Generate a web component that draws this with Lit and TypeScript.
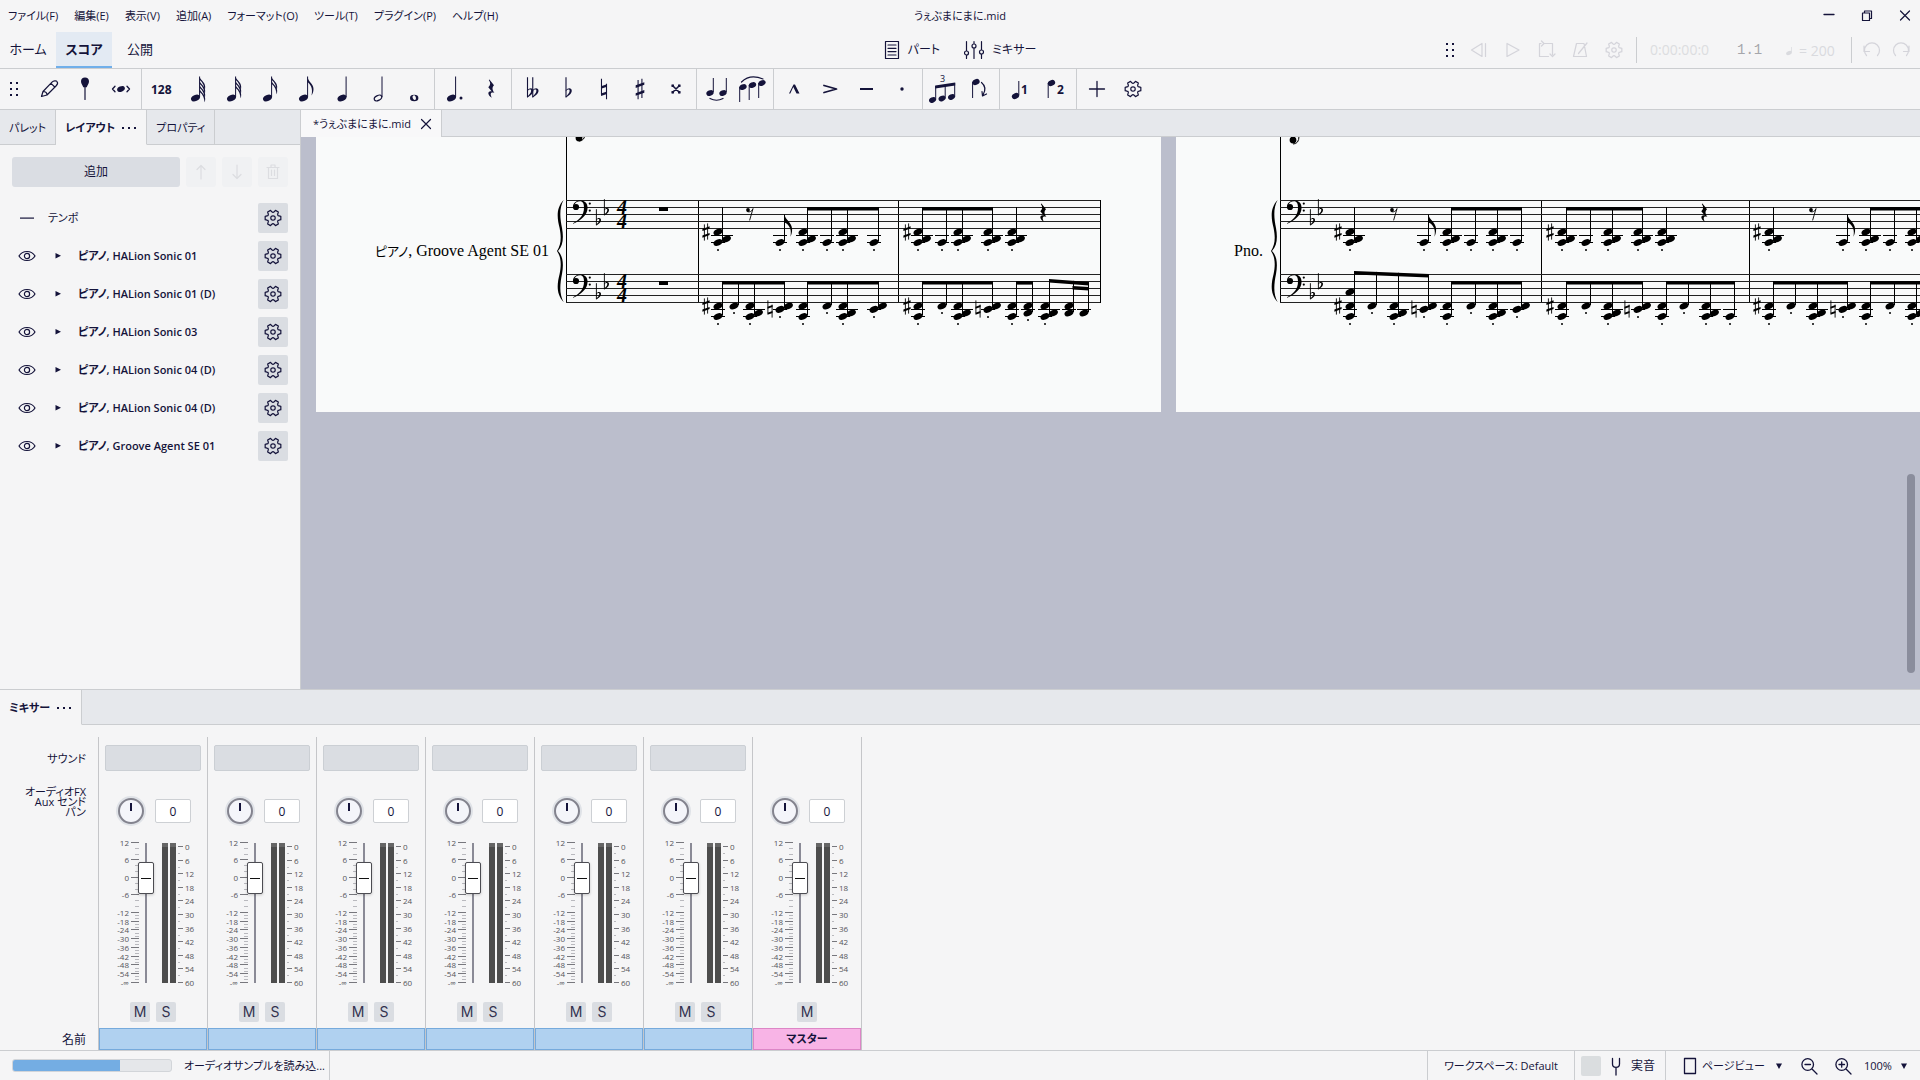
import { LitElement, html, svg, css, nothing, SVGTemplateResult, TemplateResult } from "lit";
import { customElement, property } from "lit/decorators.js";
import { classMap } from "lit/directives/class-map.js";

type Piece = SVGTemplateResult | SVGTemplateResult[] | typeof nothing;

/* ---------- music symbols, drawn around the given point ---------- */

const head = (x: number, y: number): SVGTemplateResult =>
  svg`<ellipse cx=${x} cy=${y} rx="4.7" ry="3.1" transform="rotate(-24 ${x} ${y})"/>`;

const stem = (x: number, y1: number, y2: number): SVGTemplateResult =>
  svg`<path d="M${x} ${y1}V${y2}" stroke="currentColor" stroke-width="1" fill="none"/>`;

const sharp = (x: number, y: number): SVGTemplateResult => svg`
  <g transform="translate(${x} ${y})">
    <path d="M-1.6 -7.6V8.6M1.6 -8.6V7.6" stroke="currentColor" stroke-width=".9"/>
    <path d="M-3.6 -2.2L3.6 -4.8V-2.6L-3.6 0zM-3.6 4.4L3.6 1.8V4L-3.6 6.6z" transform="translate(0 -.9)"/>
  </g>`;

const natural = (x: number, y: number): SVGTemplateResult => svg`
  <g transform="translate(${x} ${y})">
    <path d="M-2.1 -8.6V4.4M2.1 -4.4V8.6" stroke="currentColor" stroke-width=".9"/>
    <path d="M-2.5 -2.2L2.5 -3.9V-1.9L-2.5 -.2zM-2.5 3.8L2.5 2.1V4.1L-2.5 5.8z"/>
  </g>`;

const flat = (x: number, y: number): SVGTemplateResult => svg`
  <g transform="translate(${x} ${y})">
    <path d="M.4 -11.8V4.2" stroke="currentColor" stroke-width=".9"/>
    <path d="M.2 -1.4C1.8 -3.6 5.2 -3.6 5 -.8C4.8 1.6 2.4 3 .2 4.6V3.6C1.8 2.2 3.2 .8 3.3 -.8C3.4 -2.4 1.6 -2.2 .2 -.6z"/>
  </g>`;

const quarterRest = (x: number, y: number): SVGTemplateResult => svg`
  <path transform="translate(${x} ${y})" d="M-1.6 -9.5L3 -3.7C1 -1.7 1 .5 3.4 4C.6 2.8 -1.8 4 .9 8.8C-4 6 -3.6 1.4 .8 2.4L-2.7 -1.8C-.3 -4.2 -.2 -6 -2.2 -9z"/>`;

const eighthRest = (x: number, y: number): SVGTemplateResult => svg`
  <g transform="translate(${x} ${y})">
    <circle cx="-2" cy="-4" r="1.9"/>
    <path d="M-3 -2.6C-.6 -1.4 1.8 -2.6 3 -5.4L-.4 6.4" fill="none" stroke="currentColor" stroke-width=".9"/>
  </g>`;

const flag = (x: number, y: number): SVGTemplateResult => svg`
  <path transform="translate(${x} ${y})" d="M0 0C.8 5.4 7.4 8 7.6 14.4C7.7 17.6 7 19.8 6 22.2C6.4 19 6.6 16.4 5.6 13.8C4.4 10.6 2.2 8.8 0 8z"/>`;

const smallFlag = (x: number, y: number): SVGTemplateResult => svg`
  <path transform="translate(${x} ${y})" d="M0 0C.6 3.4 5 5 5.6 9.4C5.8 11.4 5.6 12.6 5 13.8C5 10.4 3.6 6 0 3.2z"/>`;

const bassClef = (x: number, y: number): SVGTemplateResult => svg`
  <g transform="translate(${x} ${y})">
    <circle cx="0" cy="0" r="3.1"/>
    <path d="M-3 -.8C-2.6 -4.6 1 -6.6 4.4 -6.6C9 -6.6 11.6 -3.6 11.6 .6C11.6 8.5 4.6 13.6 -2.8 16.8L-3 16.2C4 12.5 8 8 8 .6C8 -3.4 6.8 -5.7 4 -5.7C1.2 -5.7 -1 -4.2 -1.6 -2z"/>
    <circle cx="13.8" cy="-3.4" r="1.1"/><circle cx="13.8" cy="3.6" r="1.1"/>
  </g>`;

/* ---------- score data ---------- */

// full: three heads, low: lowest head only, wide: outer heads, mid: single upper head,
// pair: adjacent seconds, third: stacked third, base: lower head of the third, tall: wide plus a high head
type Kind = "full" | "low" | "wide" | "mid" | "pair" | "third" | "base" | "tall";
type Chord = [x: number, kind: Kind, plain?: boolean];
interface Group { notes: Chord[]; slope?: [number, number]; flagged?: boolean; second?: boolean; }
interface Voice { groups: Group[]; sharps: number[]; naturals?: number[]; eighthRests?: number[]; quarterRests?: number[]; }
interface PageData {
  left: number; right: number; start: number; end: number; name: [kana: string, latin: string]; bars: number[];
  opening: boolean; upper: Voice; lower: Voice;
}

const g = (...notes: Chord[]): Group => ({ notes });

const PAGES: PageData[] = [
  {
    left: 316, right: 1161, start: 566, end: 1100, name: ["ピアノ", ", Groove Agent SE 01"], bars: [698, 898, 1100], opening: true,
    upper: {
      sharps: [706, 907], eighthRests: [750], quarterRests: [1043],
      groups: [
        g([718, "full"]), { notes: [[780, "low"]], flagged: true },
        g([803, "full"], [827, "low"], [843, "full"], [874, "low"]),
        g([918, "full"], [942, "low"], [958, "full"], [988, "full"]), g([1012, "full"]),
      ],
    },
    lower: {
      sharps: [706, 907], naturals: [770, 978],
      groups: [
        g([718, "wide"], [734, "mid"], [750, "full"], [780, "pair"]),
        g([803, "wide"], [827, "mid"], [843, "full"], [874, "pair"]),
        g([918, "wide"], [942, "mid"], [958, "full"], [988, "pair"]),
        g([1012, "wide"], [1028, "third"]),
        { notes: [[1045, "full"], [1069, "third", true], [1084, "base", true]], slope: [5, 8], second: true },
      ],
    },
  },
  {
    left: 1176, right: 2021, start: 1280, end: 1990, name: ["", "Pno."], bars: [1541, 1749, 1990], opening: false,
    upper: {
      sharps: [1338, 1550, 1757], eighthRests: [1394, 1813], quarterRests: [1704],
      groups: [
        g([1350, "full"]), { notes: [[1424, "low"]], flagged: true },
        g([1447, "full"], [1471, "low"], [1493, "full"], [1517, "low"]),
        g([1562, "full"], [1586, "low"], [1608, "full"], [1638, "full"]), g([1662, "full"]),
        g([1769, "full"]), { notes: [[1843, "low"]], flagged: true },
        g([1866, "full"], [1890, "low"], [1912, "full"], [1936, "low"]),
      ],
    },
    lower: {
      sharps: [1338, 1550, 1757], naturals: [1414, 1627, 1833],
      groups: [
        { notes: [[1350, "tall"], [1372, "mid"], [1394, "full"], [1424, "pair"]], slope: [-3, 0] },
        g([1447, "wide"], [1471, "mid"], [1493, "full"], [1517, "pair"]),
        g([1562, "wide"], [1586, "mid"], [1608, "full"], [1638, "pair"]),
        g([1662, "wide"], [1684, "mid"], [1706, "full"], [1730, "low"]),
        g([1769, "wide"], [1791, "mid"], [1813, "full"], [1843, "pair"]),
        g([1866, "wide"], [1890, "mid"], [1912, "full"], [1936, "pair"]),
      ],
    },
  },
];

const SHAPES: Record<Kind, { left: number[]; right: number[]; dot: number }> = {
  full: { left: [32, 42.5], right: [39], dot: 50 },
  low: { left: [42.5], right: [], dot: 50 },
  wide: { left: [32, 42.5], right: [], dot: 50 },
  mid: { left: [32], right: [], dot: 39 },
  pair: { left: [35.4], right: [32], dot: 43 },
  third: { left: [32, 39], right: [], dot: 46 },
  base: { left: [39], right: [], dot: 46 },
  tall: { left: [18, 32, 42.5], right: [], dot: 50 },
};

const drawChord = (top: number, [x, kind, plain]: Chord): SVGTemplateResult => {
  const shape = SHAPES[kind];
  const lowest = Math.max(...shape.left, ...shape.right);
  const reach = kind === "full" ? 15 : 7;
  return svg`
    ${shape.left.map((y) => head(x, top + y))}
    ${shape.right.map((y) => head(x + 8.4, top + y))}
    ${lowest > 34 ? svg`<path d="M${x - 7} ${top + 35.5}H${x + reach}" class="ledger"/>` : nothing}
    ${lowest > 41 ? svg`<path d="M${x - 7} ${top + 42.5}H${x + 7}" class="ledger"/>` : nothing}
    ${plain ? nothing : svg`<circle cx=${x} cy=${top + shape.dot} r="1"/>`}`;
};

const drawGroup = (top: number, group: Group): SVGTemplateResult => {
  const { notes, flagged, second } = group;
  const first = notes[0][0] + 4.5;
  const last = notes[notes.length - 1][0] + 4.5;
  const [from, to] = group.slope ?? [7, 7];
  const beamed = notes.length > 1;
  const at = (x: number): number => (beamed ? from + ((to - from) * (x - first)) / (last - first) : flagged ? 14.5 : 7);
  return svg`
    ${notes.map((n) => drawChord(top, n))}
    ${notes.map((n) => stem(n[0] + 4.5, top + at(n[0] + 4.5), top + Math.max(...SHAPES[n[1]].left) - 1))}
    ${beamed ? svg`<path d="M${first - 0.5} ${top + from}L${last + 0.5} ${top + to}v3.6L${first - 0.5} ${top + from + 3.6}z"/>` : nothing}
    ${second ? svg`<path d="M${last - 16} ${top + 12}L${last + 0.5} ${top + 13}v3.4L${last - 16} ${top + 15.4}z"/>` : nothing}
    ${flagged ? flag(first, top + 14.5) : nothing}`;
};

const drawStaff = (page: PageData, top: number, voice: Voice): SVGTemplateResult => svg`
  ${[0, 7, 14, 21, 28].map((d) => svg`<path class="line" d="M${page.start} ${top + d + 0.5}H${page.end}"/>`)}
  ${bassClef(page.start + 10, top + 7)}
  ${flat(page.start + 30, top + 21)}${flat(page.start + 38, top + 11)}
  ${page.opening ? svg`
    <text class="meter" x=${page.start + 51} y=${top + 14}>4</text>
    <text class="meter" x=${page.start + 51} y=${top + 28}>4</text>
    <rect x=${page.start + 93} y=${top + 7} width="9" height="4"/>` : nothing}
  ${voice.sharps.map((x) => sharp(x, top + 32))}
  ${(voice.naturals ?? []).map((x) => natural(x, top + 35))}
  ${(voice.eighthRests ?? []).map((x) => eighthRest(x, top + 14))}
  ${(voice.quarterRests ?? []).map((x) => quarterRest(x, top + 13))}
  ${voice.groups.map((group) => drawGroup(top, group))}`;

@customElement("score-page")
export class ScorePage extends LitElement {
  @property({ attribute: false }) page!: PageData;

  static styles = css`
    :host { display: block; flex: none; background: #f9fafa; }
    svg { display: block; color: #000; }
    .line { stroke: #222; stroke-width: 1; }
    .ledger { stroke: #000; stroke-width: 1; }
    .bar { stroke: #000; stroke-width: 1; }
    .name { font: 16px "Liberation Serif", "Noto Sans CJK JP", serif; font-feature-settings: "palt"; text-anchor: end; }
    .kana { font-size: 13px; }
    .meter { font: italic bold 20px "Liberation Serif", serif; }
  `;

  render(): TemplateResult {
    const p = this.page;
    const width = p.right - p.left;
    const b = p.start - 9;
    return html`
      <svg width=${width} height="275" viewBox="${p.left} 137 ${width} 275" fill="currentColor" role="img" aria-label=${p.name.join("")}>
        <circle cx=${p.start + 13} cy=${p.opening ? 138 : 140} r="3.4"/>
        <path d="M${p.start + 13} ${p.opening ? 141 : 144}q6 0 6 -8" fill="none" stroke="#000"/>
        <path class="bar" d="M${p.start + 0.5} 137V303"/>
        ${p.bars.map((x) => svg`<path class="bar" d="M${x + 0.5} 200V303"/>`)}
        <path d="M${b + 6.6} 200C${b - 1} 208 ${b} 218 ${b + 2.6} 228C${b + 4.6} 238 ${b + 4} 245 ${b} 251C${b + 4} 257 ${b + 4.6} 264 ${b + 2.6} 274C${b} 284 ${b - 1} 294 ${b + 6.6} 302C${b + 2} 294 ${b + 3} 284 ${b + 5} 274C${b + 6.8} 264 ${b + 6} 256 ${b + 1} 251C${b + 6} 246 ${b + 6.8} 238 ${b + 5} 228C${b + 3} 218 ${b + 2} 208 ${b + 6.6} 200z"/>
        <text class="name" x=${p.start - 17} y="256"><tspan class="kana">${p.name[0]}</tspan>${p.name[1]}</text>
        ${drawStaff(p, 200, p.upper)}
        ${drawStaff(p, 274, p.lower)}
      </svg>`;
  }
}

/* ---------- interface icons ---------- */

const gearPath = ((): string => {
  const point = (deg: number, r: number): string => {
    const a = (deg * Math.PI) / 180;
    return `${(r * Math.cos(a)).toFixed(2)} ${(r * Math.sin(a)).toFixed(2)}`;
  };
  const parts: string[] = [];
  for (let a = 0; a < 360; a += 60) {
    parts.push(`L${point(a - 12, 8)}`, `L${point(a + 12, 8)}`, `L${point(a + 19, 6.4)}`, `Q${point(a + 30, 4.8)} ${point(a + 41, 6.4)}`);
  }
  return `M${parts.join("").slice(1)}z`;
})();

const icon = (body: Piece, size = 32, w = size, h = size): TemplateResult => html`
  <svg class="icon" width=${w} height=${h} viewBox="${(32 - w) / 2} ${(32 - h) / 2} ${w} ${h}" fill="currentColor" aria-hidden="true">${body}</svg>`;

const line = (d: string, width = 1.2): SVGTemplateResult =>
  svg`<path d=${d} fill="none" stroke="currentColor" stroke-width=${width} stroke-linecap="round" stroke-linejoin="round"/>`;

const gear = svg`<g transform="translate(16 16)" fill="none" stroke="currentColor" stroke-width="1.2" stroke-linejoin="round"><path d=${gearPath}/><circle r="2.2"/></g>`;
const grip = svg`${[10, 16, 22].map((y) => svg`<path d="M12 ${y - 1}h2v2h-2zM18 ${y - 1}h2v2h-2z"/>`)}`;
const eye = line("M8 16C11.500 10 20.500 10 24 16C20.500 22 11.500 22 8 16zM18.600 16a2.600 2.600 0 1 1 -5.200 0a2.600 2.600 0 1 1 5.200 0");
const caret = svg`<path d="M13 13.500h6l-3 5.500z"/>`;

const note = (flags: number): SVGTemplateResult => svg`
  ${head(13.5, 25)}${stem(17.6, 3.5, 24)}
  ${flags === 1
    ? svg`<path d="M17.500 3.500C18 9 23.500 10.500 23.500 16C23.500 19 22.500 21 21.500 22.500C22.500 18 22.500 13 17.500 9z"/>`
    : Array.from({ length: flags }, (_, i) => smallFlag(17.5, 3.5 + i * 4))}`;

const digit = (x: number, y: number, text: string, size = 13): SVGTemplateResult =>
  svg`<text x=${x} y=${y} font-size=${size} font-weight="700">${text}</text>`;

interface Tool { label: string; art: Piece; }

const TOOL_GROUPS: Tool[][] = [
  [
    { label: "編集", art: line("M8.500 23.500L10 18.500L19 9.200C20.500 7.700 23.300 7.500 24 8.500C24.800 9.500 24.500 11.500 23 13L14 22zM10 18.500C12.500 18.500 14 20 14 22M18 10.400L22 14.200") },
    { label: "固定", art: svg`<path d="M16 4.500c2.500 0 4 1.500 4 3.800c0 2.500-1.500 3.700-2.300 6h-3.400c-.8-2.300-2.300-3.500-2.300-6c0-2.300 1.500-3.800 4-3.800z"/>${line("M16 13V26.500", 1.2)}` },
    { label: "試聴", art: svg`<ellipse cx="16" cy="16" rx="4" ry="2.700" transform="rotate(-24 16 16)"/>${line("M10 13.200L7.500 16L10 18.800M22 13.200L24.500 16L22 18.800", 1.3)}` },
  ],
  [
    { label: "128分", art: digit(5, 20.5, "128", 12) },
    { label: "64分", art: note(4) },
    { label: "32分", art: note(3) },
    { label: "16分", art: note(2) },
    { label: "8分", art: note(1) },
    { label: "4分", art: svg`${head(16, 25)}${stem(20.1, 3.5, 24)}` },
    { label: "2分", art: svg`<ellipse cx="16" cy="25" rx="4" ry="2.400" transform="rotate(-28 16 25)" fill="none" stroke="currentColor" stroke-width="1.200"/>${stem(20, 3.5, 24)}` },
    { label: "全", art: svg`<path fill-rule="evenodd" d="M12 25a4.200 3.300 0 1 1 8.400 0a4.200 3.300 0 1 1 -8.400 0zM14.600 24.500c.4 1.800 1.400 2.600 2.500 2.400c1-.3 1-1.900.6-2.900c-.4-1.200-1.300-1.800-2.200-1.600c-.8.200-1.100 1.100-.9 2.100z"/>` },
  ],
  [
    { label: "付点", art: svg`${head(12.5, 25)}${stem(16.6, 3.5, 24)}<circle cx="22" cy="25" r="1.500"/>` },
    { label: "休符", art: quarterRest(16, 16) },
  ],
  [
    { label: "ダブルフラット", art: svg`<g transform="translate(11 19) scale(1.250)">${flat(0, 0)}${flat(4.2, 0)}</g>` },
    { label: "フラット", art: svg`<g transform="translate(13.500 19) scale(1.250)">${flat(0, 0)}</g>` },
    { label: "ナチュラル", art: svg`<g transform="translate(16 16) scale(1.200)">${natural(0, 0)}</g>` },
    { label: "シャープ", art: svg`<g transform="translate(16 16) scale(1.200)">${sharp(0, 0)}</g>` },
    { label: "ダブルシャープ", art: svg`${line("M12.500 12.500L19.500 19.500M19.500 12.500L12.500 19.500", 1.5)}<path d="M11.500 11.500h2.500v2.500h-2.500zM18 11.500h2.500v2.500h-2.500zM11.500 18h2.500v2.500h-2.500zM18 18h2.500v2.500h-2.500z"/>` },
  ],
  [
    { label: "タイ", art: svg`<g transform="translate(0 -2)">${[9, 22].map((x) => svg`<ellipse cx=${x} cy="22" rx="3.800" ry="2.700" transform="rotate(-24 ${x} 22)"/>${stem(x + 3.3, 7, 21)}`)}</g>${line("M9 25.500Q15.500 29 22 25.500")}` },
    { label: "スラー", art: svg`${[[6, 14], [15.5, 12], [25, 10]].map(([x, y]) => svg`<ellipse cx=${x} cy=${y} rx="3.800" ry="2.700" transform="rotate(-24 ${x} ${y})"/>${stem(x - 3.3, y, y + 15)}`)}${line("M4.500 9Q13 .500 26 6")}` },
  ],
  [
    { label: "マルカート", art: svg`<path d="M11 20.500L15.500 11.500h1.500L21.500 20.500h-3L15.300 14L12.300 20.500z"/>` },
    { label: "アクセント", art: line("M10 12.500L22.500 16L10 19.500", 1.8) },
    { label: "テヌート", art: svg`<path d="M10 15h13v2h-13z"/>` },
    { label: "スタッカート", art: svg`<circle cx="16" cy="16" r="1.700"/>` },
  ],
  [
    { label: "連符", art: svg`${[[5.5, 27], [15, 25.500], [24.500, 24]].map(([x, y]) => svg`<ellipse cx=${x} cy=${y} rx="3.600" ry="2.600" transform="rotate(-24 ${x} ${y})"/>${stem(x + 3.2, y - 14, y)}`)}<path d="M8.200 12.500L28.200 9.500V12.500L8.200 15.500z"/><text x="13" y="9" font-size="9">3</text>` },
    { label: "反転", art: svg`<ellipse cx="13" cy="9" rx="3.800" ry="2.800" transform="rotate(-24 13 9)"/>${stem(9.6, 9, 25)}${line("M18.500 9.500Q24.500 14.500 20 22M19 18.500L19.500 23L23.500 21")}` },
  ],
  [
    { label: "声部1", art: svg`<ellipse cx="11.500" cy="23" rx="3.800" ry="2.800" transform="rotate(-24 11.500 23)"/>${stem(14.8, 8, 22)}${digit(17, 20.500, "1", 12)}` },
    { label: "声部2", art: svg`<ellipse cx="11.500" cy="10" rx="3.800" ry="2.800" transform="rotate(-24 11.500 10)"/>${stem(8.2, 10, 25)}${digit(17, 20.500, "2", 12)}` },
  ],
  [
    { label: "追加", art: line("M8.500 16H23.500M16 8.500V23.500", 1.3) },
    { label: "設定", art: gear },
  ],
];

const TRANSPORT: Tool[] = [
  { label: "巻き戻し", art: line("M20 9.500V22.500L9.500 16zM23.500 9.500V22.500") },
  { label: "再生", art: line("M11 9.500V22.500L23 16z") },
  { label: "ループ", art: line("M13.500 9.500H22.500V20.500M11 9.500H9.500V22.500H18.500M20 20L22.500 22.500L25 20M11.500 7L14 9.500L11.500 12") },
  { label: "メトロノーム", art: line("M12.500 9.500H20L22.500 22.500H9.500zM14.500 19.500L23 9") },
  { label: "再生設定", art: gear },
];

/* ---------- mixer strip ---------- */

const LEFT_SCALE: [string, number][] = [
  ["12", 0], ["6", 17.5], ["0", 35], ["-6", 52.5], ["-12", 70], ["-18", 79], ["-24", 87.5], ["-30", 96.5],
  ["-36", 105], ["-42", 114], ["-48", 122.5], ["-54", 131.5], ["-∞", 140],
];
const RIGHT_SCALE = Array.from({ length: 11 }, (_, i): [string, number] => [String(i * 6), 4 + i * 13.6]);

const LEFT_MINOR = LEFT_SCALE.slice(0, -1).flatMap(([, y], i) => {
  const step = LEFT_SCALE[i + 1][1] - y;
  return [1 / 3, 2 / 3].map((f) => y + f * step);
});

@customElement("mixer-strip")
export class MixerStrip extends LitElement {
  @property() name = "";
  @property({ type: Boolean, reflect: true }) master = false;

  static styles = css`
    :host {
      display: flex; flex-direction: column; flex: none; width: 108px; border-left: 1px solid #c5c6c9;
      color: #14133a; font: 12px/16px "Open Sans", "Noto Sans CJK JP", sans-serif; font-feature-settings: "palt";
    }
    button { font: inherit; color: inherit; padding: 0; border: 0; border-radius: 2px; background: #dadde2; cursor: pointer; }
    .sound { height: 26px; margin: 8px 6px 0; border: 1px solid #cbcfd4; border-radius: 2px; }
    .spacer { height: 26px; margin-top: 8px; }
    .pan { display: flex; align-items: center; gap: 9px; height: 30px; margin: 25px 0 0 17px; }
    .knob { appearance: none; width: 30px; height: 30px; margin: 0; padding: 2px; box-sizing: border-box; border-radius: 50%; background: #dfe2e7; }
    .knob::-webkit-slider-thumb {
      appearance: none; width: 26px; height: 26px; border-radius: 50%; border: 2px solid #83838e;
      background: linear-gradient(#14133a, #14133a) 50% 3px / 2px 8px no-repeat #f4f5fa;
    }
    .value {
      width: 36px; height: 24px; box-sizing: border-box; padding: 0; text-align: center; border: 1px solid #cdd0d4;
      border-radius: 2px; background: #fff; color: #14133a; font: inherit;
    }
    .levels { display: flex; height: 140px; margin: 17px 0 0 15px; }
    .scale { display: block; overflow: visible; fill: #54545a; stroke: none; }
    .scale text { font: 8px "Open Sans", "Noto Sans", sans-serif; }
    .major { stroke: #77777d; stroke-width: 1; }
    .minor { stroke: #b9b9be; stroke-width: 1; }
    .end { text-anchor: end; }
    .fader {
      appearance: none; writing-mode: vertical-lr; direction: rtl; width: 16px; height: 140px; margin: 0;
      background: linear-gradient(#8a8a96, #8a8a96) 50% 0 / 2px 100% no-repeat; position: relative;
    }
    .fader::-webkit-slider-thumb {
      appearance: none; width: 16px; height: 32px; box-sizing: border-box; border: 1px solid #4c4c52; border-radius: 2px;
      background: linear-gradient(#111, #111) 50% 50% / 10px 1px no-repeat #fff; box-shadow: 0 1px 3px #0003;
    }
    .meters { display: flex; gap: 2px; margin: 0 2px 0 8px; }
    .bar { width: 6px; background: #4d4d4d; border-top: 4px solid #666; box-sizing: border-box; }
    .switches { display: flex; justify-content: center; gap: 6px; margin: 19px 0 6px; }
    .switches button { width: 20px; height: 20px; font: 14px/20px Inter, sans-serif; color: #32314f; }
    .name {
      height: 22px; box-sizing: border-box; margin-top: auto; border: 1px solid #76aadc; background: #b0d1f0;
      text-align: center; font-size: 11px; line-height: 20px; font-weight: 700;
    }
    .pink { background: #f8b4e6; border-color: #dc86c6; }
  `;

  render(): TemplateResult {
    return html`
      ${this.master ? html`<div class="spacer"></div>` : html`<button class="sound" aria-label="サウンド"></button>`}
      <div class="pan">
        <input class="knob" type="range" min="-100" max="100" value="0" aria-label="パン">
        <input class="value" type="text" .value=${"0"} aria-label="パンの値">
      </div>
      <div class="levels">
        <svg class="scale" width="24" height="140" aria-hidden="true">
          ${LEFT_MINOR.map((y) => svg`<path class="minor" d="M21 ${Math.round(y) - 0.5}h4"/>`)}
          ${LEFT_SCALE.map(([t, y]) => svg`<path class="major" d="M17 ${Math.floor(y) - 0.5}h8"/><text class="end" x="15" y=${Math.floor(y) + 2.5}>${t}</text>`)}
        </svg>
        <input class="fader" type="range" min="0" max="1000" value="824" aria-label="音量">
        <div class="meters"><div class="bar"></div><div class="bar"></div></div>
        <svg class="scale" width="20" height="140" aria-hidden="true">
          ${RIGHT_SCALE.map(([t, y], i) => svg`
            <path class="major" d="M0 ${Math.round(y) - 0.5}h5"/><text x="7" y=${Math.round(y) + 2.5}>${t}</text>
            ${i < 10 ? svg`<path class="minor" d="M0 ${Math.round(y + 7) - 0.5}h2"/>` : nothing}`)}
        </svg>
      </div>
      <div class="switches"><button>M</button>${this.master ? nothing : html`<button>S</button>`}</div>
      <div class=${classMap({ name: true, pink: this.master })}>${this.name}</div>`;
  }
}

/* ---------- application shell ---------- */

const MENUS = ["ファイル(F)", "編集(E)", "表示(V)", "追加(A)", "フォーマット(O)", "ツール(T)", "プラグイン(P)", "ヘルプ(H)"];
const INSTRUMENTS = [
  "ピアノ, HALion Sonic 01", "ピアノ, HALion Sonic 01 (D)", "ピアノ, HALion Sonic 03",
  "ピアノ, HALion Sonic 04 (D)", "ピアノ, HALion Sonic 04 (D)", "ピアノ, Groove Agent SE 01",
];

@customElement("app-root")
export class AppRoot extends LitElement {
  static styles = css`
    :host {
      display: grid; grid-template-rows: auto auto auto 1fr auto auto; grid-template-columns: minmax(0, 1fr);
      min-height: 100vh; overflow: hidden; background: #f5f5f6; color: #14133a;
      font: 11px/16px "Open Sans", "Noto Sans CJK JP", sans-serif; font-feature-settings: "palt";
    }
    button, select { font: inherit; font-feature-settings: inherit; color: inherit; background: none; border: 0; padding: 0; margin: 0; cursor: pointer; }
    select { appearance: none; }
    .icon { display: block; flex: none; }
    .titlebar, .modes { display: grid; grid-template-columns: 1fr auto 1fr; align-items: center; }
    .titlebar { height: 32px; }
    .menus { display: flex; gap: 16px; padding-left: 8px; white-space: nowrap; }
    .window { display: flex; justify-content: flex-end; gap: 8px; }
    .modes { height: 36px; border-bottom: 1px solid #cbcdd0; }
    .mode-tabs { display: flex; height: 36px; font-size: 13px; }
    .mode-tabs button { width: 56px; border-bottom: 2px solid transparent; }
    .mode-tabs .on { font-weight: 700; background: #e3eaf3; border-bottom-color: #70afea; }
    .panels { display: flex; gap: 24px; font-size: 12px; }
    .panels button { display: flex; align-items: center; gap: 8px; }
    .transport { display: flex; align-items: center; justify-content: flex-end; padding-right: 5px; }
    .transport button { width: 34px; display: flex; justify-content: center; opacity: .14; }
    .transport .steps { width: 29px; }
    .divider { width: 1px; height: 26px; background: #cbcdd0; margin: 0 5px; }
    .time { width: 95px; text-indent: 8px; font-size: 14px; color: #dcdde0; }
    .beat { width: 48px; font: 14px/16px "Liberation Mono", monospace; color: #a5a6ab; }
    .tempo { width: 61px; display: flex; align-items: baseline; gap: 6px; font-size: 14px; color: #d9dade; }
    .toolbar { display: flex; height: 40px; border-bottom: 1px solid #cbcdd0; align-items: stretch; }
    .tools { display: flex; padding: 0 2px; border-right: 1px solid #cbcdd0; }
    .tools:last-child { border-right: 0; }
    .tools button { width: 36px; display: flex; align-items: center; justify-content: center; }
    .handle { margin-right: 5px; display: flex; align-items: center; }
    .workspace { display: grid; grid-template-columns: 301px minmax(0, 1fr); min-height: 0; }
    .side { border-right: 1px solid #cbcdd0; display: flex; flex-direction: column; }
    .tabs { display: flex; height: 35px; }
    .tabs button { border-right: 1px solid #cbcdd0; border-bottom: 1px solid #cbcdd0; background: #e6e8ec; padding: 2px 9px 0; white-space: nowrap; }
    .tabs .on { background: #f5f5f6; border-bottom-color: transparent; font-weight: 700; display: flex; align-items: center; gap: 6px; }
    .rest { flex: 1; background: #e6e8ec; border-bottom: 1px solid #cbcdd0; }
    .panel { padding: 12px; display: flex; flex-direction: column; gap: 12px; }
    .actions { display: grid; grid-template-columns: 1fr 30px 30px 30px; column-gap: 6px; height: 30px; font-size: 12px; }
    .actions button { background: #dadde3; border-radius: 3px; display: flex; align-items: center; justify-content: center; }
    .actions button:disabled { background: #f0f1f3; color: #dcdde1; }
    .tree { margin: 0; padding: 0; list-style: none; }
    .tree li { display: flex; align-items: center; height: 38px; font-weight: 600; }
    .tree li.plain { font-weight: 400; }
    .slot { width: 30px; display: flex; justify-content: center; }
    .plain .slot { margin-right: 6px; }
    .twisty { width: 30px; margin-right: 6px; display: flex; justify-content: center; }
    .label { flex: 1; }
    .square { width: 30px; height: 30px; border-radius: 2px; background: #dadde2; display: flex; align-items: center; justify-content: center; }
    .document { display: grid; grid-template-rows: 27px minmax(0, 1fr); min-width: 0; }
    .doc-tabs { display: flex; }
    .doc-tab { display: flex; align-items: center; gap: 8px; padding: 0 8px 0 12px; border-right: 1px solid #cbcdd0; background: #f8f8f9; }
    .canvas { position: relative; overflow: hidden; background: #bbbecc; }
    .pages { display: flex; gap: 15px; padding-left: 15px; }
    .thumb { position: absolute; right: 5px; bottom: 16px; width: 8px; height: 36%; border-radius: 4px; background: #8a8d9c; }
    .mixer { border-top: 1px solid #cbcdd0; }
    .strips { display: flex; padding-top: 12px; height: 313px; }
    .captions { width: 86px; padding-right: 12px; text-align: right; display: flex; flex-direction: column; }
    .captions .sound { line-height: 28px; padding-top: 8px; }
    .captions .tight { line-height: 10px; padding-top: 14px; }
    .captions .last { margin-top: auto; line-height: 20px; font-size: 12px; }
    .strips mixer-strip[master] { border-right: 1px solid #c5c6c9; }
    .status { display: flex; border-top: 1px solid #cbcdd0; height: 29px; align-items: stretch; }
    .status > * { display: flex; align-items: center; }
    .loading { gap: 12px; padding: 0 4px 0 12px; border-right: 1px solid #cbcdd0; }
    progress { appearance: none; width: 160px; height: 13px; border: 0; }
    progress::-webkit-progress-bar { background: #e5e7ea; border: 1px solid #d2d5d9; border-radius: 3px; box-sizing: border-box; overflow: hidden; }
    progress::-webkit-progress-value { background: #74ade3; }
    .push { flex: 1; }
    .cell { border-left: 1px solid #cbcdd0; }
    .space { padding: 0 16px; }
    .concert { padding: 0 10px 0 6px; font-size: 12px; }
    .concert i { width: 20px; height: 20px; background: #dadddf; border-radius: 2px; }
    .view { padding: 0 4px 0 12px; }
    .view label { display: flex; align-items: center; }
    .view .zoom { margin-left: 4px; }
  `;

  render(): TemplateResult {
    return html`
      <header class="titlebar">
        <nav class="menus">${MENUS.map((m) => html`<button>${m}</button>`)}</nav>
        <div>うぇぶまにまに.mid</div>
        <div class="window">
          <button aria-label="最小化">${icon(line("M11 14.500H21", 1.3), 30)}</button>
          <button aria-label="元に戻す">${icon(line("M11.500 13H18.500V20.500H11.500zM13.500 13V11H20.500V18.500H18.500"), 30)}</button>
          <button aria-label="閉じる">${icon(line("M11.500 11L20.500 20M20.500 11L11.500 20"), 30)}</button>
        </div>
      </header>
      <div class="modes">
        <nav class="mode-tabs"><button>ホーム</button><button class="on">スコア</button><button>公開</button></nav>
        <div class="panels">
          <button>${icon(line("M9.500 7.500H22.500V24.500H9.500zM12 11H20M12 14.300H20M12 17.600H20M12 21H20"), 18, 16, 20)}パート</button>
          <button>${icon(line("M8.500 7.500V17M8.500 21V24.500M16 7.500V10M16 14V24.500M23.500 7.500V16M23.500 20V24.500M10.500 19a2 2 0 1 1 -4 0a2 2 0 1 1 4 0M18 12a2 2 0 1 1 -4 0a2 2 0 1 1 4 0M25.500 18a2 2 0 1 1 -4 0a2 2 0 1 1 4 0"), 20)}ミキサー</button>
        </div>
        <div class="transport">
          ${icon(grip, 22, 22, 24)}
          ${TRANSPORT.map((t) => html`<button aria-label=${t.label}>${icon(t.art, 28)}</button>`)}
          <span class="divider"></span>
          <span class="time">0:00:00:0</span><span class="beat">1.1</span>
          <span class="tempo"><svg width="8" height="14" viewBox="0 0 8 14" fill="currentColor" aria-hidden="true"><ellipse cx="4" cy="11" rx="3" ry="2" transform="rotate(-24 4 11)"/><path d="M6.300 5h.700v5h-.700z"/></svg>= 200</span>
          <span class="divider"></span>
          <button class="steps" aria-label="元に戻す操作">${icon(line("M10.500 21.500A7.500 7.500 0 1 1 21.500 21.500M8 12V17.500H13.500"), 28)}</button>
          <button class="steps" aria-label="やり直す">${icon(line("M10.500 21.500A7.500 7.500 0 1 1 21.500 21.500M24 12V17.500H18.500"), 28)}</button>
        </div>
      </div>
      <div class="toolbar">
        ${TOOL_GROUPS.map((tools, i) => html`
          <div class="tools">
            ${i === 0 ? html`<span class="handle">${icon(grip, 24)}</span>` : nothing}
            ${tools.map((t) => html`<button aria-label=${t.label}>${icon(t.art)}</button>`)}
          </div>`)}
      </div>
      <main class="workspace">
        <aside class="side">
          <div class="tabs">
            <button>パレット</button>
            <button class="on">レイアウト ${icon(svg`<path d="M9 15h2v2H9zM15 15h2v2h-2zM21 15h2v2h-2z"/>`, 16)}</button>
            <button>プロパティ</button>
            <div class="rest"></div>
          </div>
          <div class="panel">
            <div class="actions">
              <button>追加</button>
              <button disabled aria-label="上へ">${icon(line("M16 23V9.500M12 13.500L16 9.500L20 13.500"), 24)}</button>
              <button disabled aria-label="下へ">${icon(line("M16 9V22.500M12 18.500L16 22.500L20 18.500"), 24)}</button>
              <button disabled aria-label="削除">${icon(line("M11.500 11.500V22.500H20.500V11.500M10 11.500H22M14 11V9H18V11M14.500 14V19.500M17.500 14V19.500"), 24)}</button>
            </div>
            <ul class="tree">
              <li class="plain">
                <span class="slot">${icon(svg`<path d="M9 15.500h14v1.200H9z"/>`, 20)}</span>
                <span class="label">テンポ</span>
                <button class="square" aria-label="テンポの設定">${icon(gear, 20)}</button>
              </li>
              ${INSTRUMENTS.map((name) => html`
                <li>
                  <button class="slot" aria-label="表示切替">${icon(eye, 20)}</button>
                  <button class="twisty" aria-label="展開">${icon(svg`<path d="M14.500 13v5.500L20 15.700z"/>`, 16)}</button>
                  <span class="label">${name}</span>
                  <button class="square" aria-label="設定">${icon(gear, 20)}</button>
                </li>`)}
            </ul>
          </div>
        </aside>
        <section class="document">
          <div class="doc-tabs">
            <div class="doc-tab">*うぇぶまにまに.mid <button aria-label="閉じる">${icon(line("M11.500 11.500L20.500 20.500M20.500 11.500L11.500 20.500"), 14)}</button></div>
            <div class="rest"></div>
          </div>
          <div class="canvas">
            <div class="pages">${PAGES.map((p) => html`<score-page .page=${p}></score-page>`)}</div>
            <div class="thumb"></div>
          </div>
        </section>
      </main>
      <section class="mixer">
        <div class="tabs">
          <button class="on">ミキサー ${icon(svg`<path d="M9 15h2v2H9zM15 15h2v2h-2zM21 15h2v2h-2z"/>`, 16)}</button>
          <div class="rest"></div>
        </div>
        <div class="strips">
          <div class="captions">
            <div class="sound">サウンド</div>
            <div class="tight">オーディオFX<br>Aux センド<br>パン</div>
            <div class="last">名前</div>
          </div>
          ${Array.from({ length: 6 }, () => html`<mixer-strip></mixer-strip>`)}
          <mixer-strip master name="マスター"></mixer-strip>
        </div>
      </section>
      <footer class="status">
        <div class="loading"><progress max="160" value="108" aria-label="読み込み"></progress><span>オーディオサンプルを読み込...</span></div>
        <div class="push"></div>
        <button class="cell space">ワークスペース: Default</button>
        <button class="cell concert"><i></i>${icon(line("M12.500 8.500V14C12.500 18.500 19.500 18.500 19.500 14V8.500M16 17.500V25", 1.3), 30)}実音</button>
        <div class="cell view">
          <label>${icon(line("M10.500 8.500H21.500V23.500H10.500z", 1.3), 24)}<select aria-label="表示モード"><option>ページビュー</option></select>${icon(caret, 26)}</label>
          <button aria-label="縮小">${icon(line("M20.500 14.500a5.800 5.800 0 1 1 -11.600 0a5.800 5.800 0 1 1 11.600 0M19 19L24 24M12 14.500H17.500", 1.3), 34)}</button>
          <button aria-label="拡大">${icon(line("M20.500 14.500a5.800 5.800 0 1 1 -11.600 0a5.800 5.800 0 1 1 11.600 0M19 19L24 24M12 14.500H17.500M14.700 11.800V17.200", 1.3), 34)}</button>
          <label class="zoom"><select aria-label="倍率"><option>100%</option></select>${icon(caret, 24)}</label>
        </div>
      </footer>`;
  }
}
